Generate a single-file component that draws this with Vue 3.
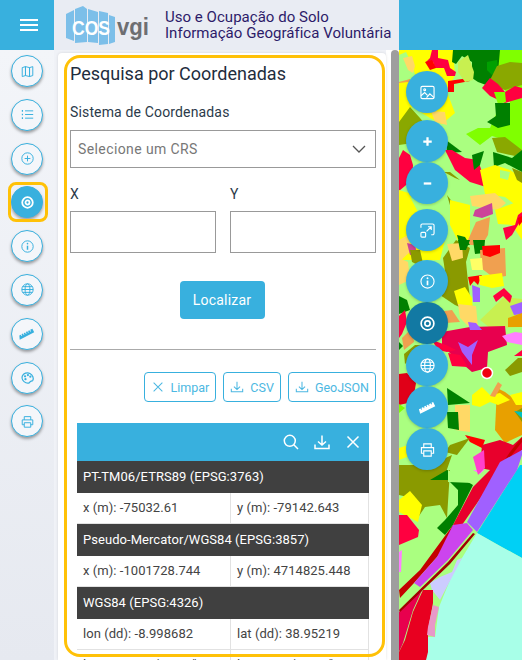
<script setup>
const sideButtons = ["map", "list", "plus", "target", "info", "globe", "ruler", "palette", "printer"];

const mapGroups = [
  ["image"],
  ["zoomin", "zoomout"],
  ["extent"],
  ["info", "target", "globe", "ruler", "printer"],
];

const results = [
  { crs: "PT-TM06/ETRS89 (EPSG:3763)", a: "x (m): -75032.61", b: "y (m): -79142.643" },
  { crs: "Pseudo-Mercator/WGS84 (EPSG:3857)", a: "x (m): -1001728.744", b: "y (m): 4714825.448" },
  { crs: "WGS84 (EPSG:4326)", a: "lon (dd): -8.998682", b: "lat (dd): 38.95219" },
];

// painted in order, page coordinates
const mapShapes = [
  // top
  ["#80ff00", "490,50 522,50 522,160 505,140 492,136 480,145 466,134 478,128 490,128 500,105 510,103"],
  ["#ffff00", "399,50 453,50 455,75 447,92 455,113 442,124 430,118 412,107 399,125"],
  ["#aaff80", "399,55 406,52 410,60 417,80 399,82"],
  ["#ffd966", "403,58 412,56 415,66 413,73 408,70"],
  ["#f0a050", "399,82 410,79 410,82 399,86"],
  ["#ffff00", "399,83 408,82 408,110 399,122"],
  ["#ff0040", "432,50 438,50 438,58 448,60 450,68 456,72 455,76 447,76 444,68 435,68 433,62 426,62 430,58"],
  ["#ff0000", "425,62 432,60 436,68 430,70"],
  ["#ff0000", "448,81 469,78 470,81 454,84 454,92 448,92"],
  ["#008000", "453,50 500,50 498,72 494,78 486,85 478,82 472,78 472,62 462,56 456,64 452,62"],
  ["#00a000", "487,62 497,60 498,70 492,75 487,70"],
  ["#c8f050", "458,62 468,55 474,72 473,80 465,82 458,72"],
  ["#8aa800", "490,80 497,66 510,62 522,63 522,85 505,90 496,88"],
  ["#ff0040", "482,88 490,78 498,84 505,92 515,86 522,88 522,98 505,103 490,96"],
  ["#80ff00", "494,92 505,92 506,102 498,104"],
  ["#008000", "495,103 510,103 510,125 498,128 487,122 496,116"],
  ["#8aa800", "399,122 410,107 420,118 428,128 445,135 420,142 399,145"],
  ["#ffd966", "431,111 445,112 447,125 435,122"],
  // middle band
  ["#008000", "446,140 462,152 447,153"],
  ["#ff0040", "403,150 410,155 413,165 412,180 399,191 399,158"],
  ["#ff0040", "445,150 452,150 465,158 478,160 483,175 494,182 486,187 470,182 455,170"],
  ["#8aa800", "492,138 505,137 522,150 515,156 497,152"],
  ["#008000", "493,152 512,158 522,150 522,172 505,163 494,167"],
  ["#008000", "472,155 484,151 480,165 474,170"],
  ["#ffff00", "480,170 495,165 510,170 522,178 522,210 505,197 485,194"],
  ["#aaff80", "500,170 510,172 508,180 500,178"],
  ["#8a9a00", "512,168 522,172 522,183 517,180"],
  ["#ffff00", "399,190 415,195 440,205 445,240 440,260 405,260 399,260"],
  ["#ffd966", "399,240 408,235 412,250 399,262"],
  ["#aaff80", "410,197 445,205 450,232 440,245 425,225"],
  ["#8a9a00", "444,172 450,172 460,180 455,178"],
  ["#8a9a00", "447,195 462,215 470,225 465,232 455,222"],
  ["#ffff00", "450,200 470,205 470,240 460,245 450,225"],
  ["#ffd966", "470,196 495,193 506,203 498,210 472,206"],
  ["#cc4499", "475,210 492,203 493,214 482,218 473,216"],
  ["#ffff00", "495,210 522,200 522,240 512,225 498,224"],
  ["#f0a050", "468,240 476,222 490,217 488,235 482,245 470,245"],
  ["#ff0040", "503,228 515,225 518,215 522,212 522,218 512,235 506,240"],
  ["#ff0000", "518,218 522,216 522,222 519,226"],
  ["#008000", "457,235 465,237 470,245 460,246"],
  // lower middle
  ["#ffd966", "399,258 408,262 410,280 399,285"],
  ["#cc4499", "407,243 415,245 417,254 410,255"],
  ["#8a9a00", "410,250 420,250 424,268 412,262"],
  ["#8a9a00", "443,258 456,240 470,248 466,262 468,282 470,298 473,313 455,305 440,295 446,278"],
  ["#ffd966", "447,244 462,243 463,258 452,261"],
  ["#008000", "458,240 470,240 466,250 460,250"],
  ["#008000", "473,240 485,240 484,253 475,254"],
  ["#f0a050", "480,250 505,248 506,276 494,278 481,268"],
  ["#ffff66", "470,259 482,258 483,270 472,270"],
  ["#ff0000", "482,246 500,245 500,253 490,257 483,255"],
  ["#ff0000", "468,277 482,275 478,285 474,281 470,286"],
  ["#ffff00", "479,276 502,273 504,286 492,288 480,285"],
  ["#a060ff", "472,285 480,288 480,302 473,302"],
  ["#ffff00", "454,291 465,287 472,298 473,312 458,305"],
  ["#c8f050", "480,320 504,297 522,299 522,327 490,328"],
  ["#ff0040", "493,296 504,288 512,296 510,303 503,296 496,302"],
  ["#a060ff", "510,306 522,302 522,314 514,315"],
  ["#e8a000", "508,318 522,313 522,327 508,327"],
  ["#ffd966", "458,304 476,306 478,327 468,326 460,318"],
  ["#f0a050", "437,312 452,310 460,322 445,323"],
  ["#008000", "399,296 407,300 410,310 399,314"],
  ["#ff0040", "399,316 405,310 407,322 402,334 399,338"],
  ["#f0a050", "402,338 412,328 414,342 404,350"],
  ["#008000", "399,342 403,346 399,350"],
  ["#8a9a00", "404,354 415,345 425,345 405,364"],
  // crimson centre
  ["#e8004e", "442,332 470,327 505,326 507,345 488,352 487,368 472,372 458,360 442,346"],
  ["#ff0040", "432,340 446,345 456,350 447,352 438,350"],
  ["#ff0040", "448,353 460,355 468,367 452,366"],
  ["#a060ff", "458,342 468,347 478,340 472,355 472,365 462,352"],
  ["#ff80ff", "502,336 515,332 522,333 522,345 507,342"],
  ["#a060ff", "468,322 476,323 482,330 470,330"],
  ["#8a9a00", "505,370 518,358 522,358 522,372 510,376"],
  ["#ff0040", "514,356 522,350 522,356"],
  // lower right
  ["#e8a000", "497,388 505,392 522,405 522,435 505,443 495,430"],
  ["#ffff00", "472,395 482,387 490,395 500,393 510,400 498,405 490,402 480,407 472,405"],
  ["#ffff00", "510,395 522,392 522,405 516,405"],
  ["#f0a050", "490,396 498,382 502,385 495,397"],
  ["#8a9a00", "515,412 522,408 522,422"],
  ["#00c0c0", "514,411 522,412 522,418"],
  ["#008000", "447,388 470,403 448,405"],
  ["#e00018", "399,374 407,373 416,383 414,395 408,403 399,405"],
  ["#80ff00", "399,404 405,408 399,413"],
  ["#ffd966", "455,405 470,405 470,432 455,430"],
  ["#008000", "447,412 458,412 459,430 448,428"],
  ["#ff0000", "465,435 485,440 482,448 470,442"],
  ["#8a9a00", "450,445 470,438 457,455 445,452"],
  ["#ffff00", "399,448 408,445 412,455 399,460"],
  // bottom
  ["#8a9a00", "399,470 450,470 447,518 440,505 425,507 417,519 412,498 399,495"],
  ["#8a9a00", "399,465 430,465 452,455 445,475 399,475"],
  ["#008000", "430,480 447,470 473,485 453,525 445,535 437,528 445,520 458,505 458,490 448,480"],
  ["#aaff80", "448,470 473,483 448,482"],
  ["#ffff00", "399,500 410,491 422,505 418,522 399,512"],
  ["#ff0040", "399,515 407,515 419,530 418,537 399,545"],
  ["#ff80ff", "399,552 402,550 401,572 399,572"],
  ["#ff80ff", "473,470 484,470 480,474"],
  // coast
  ["#00d0f5", "520,465 522,465 522,558 500,546 477,533"],
  ["#a8ffe8", "477,533 500,546 522,558 522,660 426,660 428,637 435,637 439,607 452,575 462,558"],
  ["#e8002c", "482,445 500,440 513,445 522,437 522,450 500,470 462,525 453,525 473,487 490,470 480,468"],
  ["#ff40cc", "473,457 484,450 485,468 478,475"],
  ["#c40000", "490,482 510,452 522,437 522,442 500,470"],
  ["#c40000", "453,525 462,525 437,557 414,583 400,598 399,590 420,570"],
  ["#a060ff", "500,462 522,450 522,455 517,470 477,532 467,522"],
  ["#cc44ee", "453,525 467,523 473,530 448,560 420,587 414,583 437,557"],
  ["#ccccff", "430,583 440,577 452,572 457,560 462,558 440,600 432,590"],
  ["#e8004e", "399,612 423,588 413,610 403,643 399,652"],
  ["#a00000", "473,533 475,534 450,564 400,612 399,610 448,562"],
  ["#e80020", "423,590 433,590 433,603 428,630 428,652 426,660 399,660 399,652 405,640 413,612"],
  ["#e898c8", "433,605 439,607 435,625 435,637 427,635 428,627"],
];
</script>

<template>
  <div class="app">
    <header class="topbar">
      <button class="menu"><span></span><span></span><span></span></button>
      <div class="brand">
        <svg class="logo" viewBox="0 0 86 40" width="86" height="40">
          <g fill="#7cbfe9">
            <path d="M0 8l8-4v31l-8-3z" />
            <path d="M9 3l8-3 4 3v33l-12 1z" />
            <path d="M22 3l10 3v31l-10-1z" />
            <path d="M33 5l9 2v31l-9 1z" />
            <path d="M43 9l6 2v25l-6 2z" />
          </g>
          <text x="6" y="29" class="logo-cos" textLength="38" lengthAdjust="spacingAndGlyphs">COS</text>
          <text x="51" y="29" class="logo-vgi" textLength="32" lengthAdjust="spacingAndGlyphs">vgi</text>
        </svg>
        <div class="brand-text">
          <div>Uso e Ocupação do Solo</div>
          <div>Informação Geográfica Voluntária</div>
        </div>
      </div>
      <div class="top-fill"></div>
    </header>

    <div class="main">
      <aside class="sidebar">
        <div v-for="b in sideButtons" :key="b" class="side-wrap" :class="{ current: b === 'target' }">
          <button class="side-btn" :class="{ active: b === 'target' }">
            <svg viewBox="0 0 16 16" class="ico">
              <template v-if="b === 'map'">
                <path d="M1.5 3.2 5.5 2v11l-4 1.2zM5.5 2l5 1.2v11l-5-1.2zM10.5 3.2l4-1.2v11l-4 1.200z" />
              </template>
              <template v-else-if="b === 'list'">
                <path d="M5 3.5h10M5 8h10M5 12.500h10" />
                <path d="M1 3.500h1.500M1 8h1.500M1 12.500h1.500" stroke-width="2" />
              </template>
              <template v-else-if="b === 'plus'">
                <circle cx="8" cy="8" r="7" />
                <path d="M8 4.500v7M4.500 8h7" />
              </template>
              <template v-else-if="b === 'target'">
                <circle cx="8" cy="8" r="6.500" stroke-width="2.200" />
                <circle cx="8" cy="8" r="2.500" stroke-width="2.200" />
              </template>
              <template v-else-if="b === 'info'">
                <circle cx="8" cy="8" r="7" />
                <path d="M8 7v5" stroke-width="1.800" />
                <circle cx="8" cy="4.500" r="1" fill="currentColor" stroke="none" />
              </template>
              <template v-else-if="b === 'globe'">
                <circle cx="8" cy="8" r="7" />
                <ellipse cx="8" cy="8" rx="3" ry="7" />
                <path d="M1 8h14M2 4.500h12M2 11.500h12" />
              </template>
              <template v-else-if="b === 'ruler'">
                <path transform="rotate(-27 8 8)" fill="currentColor" stroke="none"
                  d="M-2 5.500h2v2h1v-2h2v2h1v-2h2v2h1v-2h2v2h1v-2h2v2h1v-2h3v5h-20z" />
              </template>
              <template v-else-if="b === 'palette'">
                <path stroke-width="1.500" d="M1.500 6.500c1.500-3.500 6-5.500 9.500-3.500s5 6 3.500 8.500c-1 1.500-3 .5-3.500 2-.5 1.500-2.500 2-5 1C2.500 13.300.5 9.500 1.500 6.500z" />
                <circle cx="5" cy="6.500" r="1.400" fill="currentColor" stroke="none" />
                <circle cx="8.500" cy="5" r="1.400" fill="currentColor" stroke="none" />
                <circle cx="11.500" cy="7" r="1.400" fill="currentColor" stroke="none" />
                <circle cx="5.500" cy="10" r="1.400" fill="currentColor" stroke="none" />
              </template>
              <template v-else>
                <path d="M4 6V2h8v4M4 12H1.500V6h13v6H12" />
                <path d="M4 9.500h8V15H4z" />
              </template>
            </svg>
          </button>
        </div>
      </aside>

      <section class="panel">
        <div class="panel-body">
          <h2>Pesquisa por Coordenadas</h2>
          <label class="field-label">Sistema de Coordenadas</label>
          <div class="select">
            <span>Selecione um CRS</span>
            <svg viewBox="0 0 16 16" width="16" height="16" class="chev"><path d="M2 5l6 6 6-6" /></svg>
          </div>
          <div class="coords">
            <div>
              <label class="field-label">X</label>
              <div class="input"></div>
            </div>
            <div>
              <label class="field-label">Y</label>
              <div class="input"></div>
            </div>
          </div>
          <div class="locate-row"><button class="locate">Localizar</button></div>
          <hr />
          <div class="actions">
            <button class="ghost">
              <svg viewBox="0 0 16 16" width="14" height="14"><path d="M3 3l10 10M13 3 3 13" /></svg>
              <span>Limpar</span>
            </button>
            <button class="ghost">
              <svg viewBox="0 0 16 16" width="14" height="14"><path d="M1.500 10v3.500h13V10M8 2v8.500M4.500 7.500 8 11l3.500-3.500" /></svg>
              <span>CSV</span>
            </button>
            <button class="ghost">
              <svg viewBox="0 0 16 16" width="14" height="14"><path d="M1.500 10v3.500h13V10M8 2v8.500M4.500 7.500 8 11l3.500-3.500" /></svg>
              <span>GeoJSON</span>
            </button>
          </div>

          <div class="results">
            <div class="results-head">
              <svg viewBox="0 0 16 16" width="16" height="16"><circle cx="6.800" cy="6.800" r="5.500" /><path d="M10.800 10.800 15 15" /></svg>
              <svg viewBox="0 0 16 16" width="16" height="16"><path d="M1 10.500V14.500h14v-4M8 1.500v9.500M4 7.500 8 11l4-3.500" /></svg>
              <svg viewBox="0 0 16 16" width="16" height="16"><path d="M2.500 2.500l11 11M13.500 2.500l-11 11" /></svg>
            </div>
            <template v-for="r in results" :key="r.crs">
              <div class="crs">{{ r.crs }}</div>
              <div class="vals">
                <div>{{ r.a }}</div>
                <div>{{ r.b }}</div>
              </div>
            </template>
            <div class="vals">
              <div>lon: -008º 59'55.26"W</div>
              <div>lat: 38º57'07.88"N</div>
            </div>
          </div>
        </div>
        <div class="outline"></div>
      </section>

      <div class="scroll"><div class="thumb"></div></div>

      <div class="map">
        <svg class="map-svg" viewBox="399 50 123 610" width="123" height="610">
          <rect x="399" y="50" width="123" height="610" fill="#aaff80" />
          <polygon v-for="(s, i) in mapShapes" :key="i" :points="s[1]" :fill="s[0]" />
          <circle cx="487" cy="373" r="5.500" fill="#f00010" stroke="#fff" stroke-width="1.500" />
        </svg>
        <div class="map-tools">
          <div v-for="(g, gi) in mapGroups" :key="gi" class="tool-group">
            <button v-for="t in g" :key="t" class="map-btn" :class="{ active: t === 'target' }">
              <svg viewBox="0 0 16 16" width="15" height="15" class="ico">
                <template v-if="t === 'image'">
                  <rect x="1" y="1.500" width="14" height="13" rx="1.500" />
                  <path d="M1 11.500 5 8l3 3M7 13.500l3.500-4 4.500 4" />
                  <circle cx="5" cy="5" r="1" />
                </template>
                <template v-else-if="t === 'zoomin'">
                  <path d="M8 3.500v9M3.500 8h9" stroke-width="2.400" />
                </template>
                <template v-else-if="t === 'zoomout'">
                  <path d="M4 8h8" stroke-width="2.400" />
                </template>
                <template v-else-if="t === 'extent'">
                  <path d="M5 1h8.500A1.500 1.500 0 0 1 15 2.500V11a1.500 1.500 0 0 1-1.500 1.500H12M1 5V2.500A1.500 1.500 0 0 1 2.500 1H5" />
                  <rect x="1" y="10" width="5" height="5" rx="1" />
                  <path d="M7 9l5-5M8.500 4H12v3.500" />
                </template>
                <template v-else-if="t === 'info'">
                  <circle cx="8" cy="8" r="7" />
                  <path d="M8 7v5" stroke-width="1.800" />
                  <circle cx="8" cy="4.500" r="1" fill="currentColor" stroke="none" />
                </template>
                <template v-else-if="t === 'target'">
                  <circle cx="8" cy="8" r="6.800" stroke-width="1.800" />
                  <circle cx="8" cy="8" r="2.800" stroke-width="1.800" />
                </template>
                <template v-else-if="t === 'globe'">
                  <circle cx="8" cy="8" r="7" />
                  <ellipse cx="8" cy="8" rx="3" ry="7" />
                  <path d="M1 8h14M2 4.500h12M2 11.500h12" />
                </template>
                <template v-else-if="t === 'ruler'">
                  <path transform="rotate(-27 8 8)" fill="currentColor" stroke="none"
                    d="M-1 5.500h2v1.500h1v-1.500h2v1.500h1v-1.500h2v1.500h1v-1.500h2v1.500h1v-1.500h2v1.500h1v-1.500h2v5h-18z" />
                </template>
                <template v-else>
                  <path d="M4 6V2h8v4M4 12H1.500V6h13v6H12" />
                  <path d="M4 9.500h8V15H4z" />
                </template>
              </svg>
            </button>
          </div>
        </div>
      </div>
    </div>
  </div>
</template>

<style>
html, body { margin: 0; height: 100%; overflow: hidden; }
</style>

<style scoped>
.app {
  width: 522px;
  height: 660px;
  overflow: hidden;
  display: flex;
  flex-direction: column;
  font-family: Roboto, "Liberation Sans", sans-serif;
  background: #f0f2f7;
}
button { font-family: inherit; cursor: pointer; }

.topbar { height: 50px; display: flex; flex: none; background: #e9ecf3; }
.menu {
  width: 54px;
  background: #38b0de;
  border: 0;
  padding: 0;
  display: flex;
  flex-direction: column;
  gap: 3px;
  align-items: center;
  justify-content: center;
}
.menu span { display: block; width: 18px; height: 2px; background: #fff; margin-left: 4px; }
.brand { width: 345px; display: flex; align-items: center; padding-left: 12px; box-sizing: border-box; }
.logo { flex: none; margin-right: 13px; margin-top: 2px; }
.logo-cos { font: 700 21px "Liberation Sans", sans-serif; fill: #fff; }
.logo-vgi { font: 700 24px "Liberation Sans", sans-serif; fill: #6d6e71; }
.brand-text { font-size: 15px; line-height: 16px; color: #2d1b69; letter-spacing: .03px; white-space: nowrap; }
.top-fill { flex: 1; background: #38b0de; }

.main { flex: 1; display: flex; min-height: 0; position: relative; }
.sidebar {
  width: 54px;
  flex: none;
  display: flex;
  flex-direction: column;
  align-items: center;
  gap: 11.8px;
  padding-top: 5px;
  box-sizing: border-box;
  background: linear-gradient(#f3f5f9, #e6e9f0);
}
.side-wrap { width: 32px; height: 32px; position: relative; }
.side-wrap.current::after {
  content: "";
  position: absolute;
  left: -3px;
  top: -4px;
  width: 34px;
  height: 34px;
  border: 3px solid #ffc107;
  border-radius: 8px;
}
.side-btn {
  width: 32px;
  height: 32px;
  border-radius: 50%;
  border: 1px solid #38b0de;
  background: #f4f6fa;
  color: #38b0de;
  padding: 0;
  display: flex;
  align-items: center;
  justify-content: center;
  box-shadow: 0 2px 3px rgba(0, 0, 0, .35);
}
.side-btn .ico { width: 13px; height: 13px; overflow: visible; }
.side-btn.active { background: #38b0de; color: #fff; }
.ico { fill: none; stroke: currentColor; stroke-width: 1.2; overflow: visible; }

.panel {
  width: 328px;
  margin: 3px 0 0 4px;
  background: #fff;
  position: relative;
  overflow: hidden;
  flex: none;
  border-radius: 4px 4px 0 0;
  box-shadow: 0 0 3px rgba(0, 0, 0, .12);
}
.panel-body { padding: 9px 10px 0 12px; color: #2b3a4a; }
.outline {
  position: absolute;
  left: 6px;
  top: 2px;
  width: 315px;
  height: 596px;
  border: 3px solid #ffc107;
  border-radius: 16px;
  pointer-events: none;
}
h2 { font-size: 18px; line-height: 24px; font-weight: 400; margin: 0 0 16px; color: #1f2d3d; }
.field-label { display: block; font-size: 14px; line-height: 20px; letter-spacing: .15px; }
.select {
  margin-top: 8px;
  height: 38px;
  border: 1px solid #999;
  box-sizing: border-box;
  display: flex;
  align-items: center;
  justify-content: space-between;
  padding: 0 8px 0 7px;
  font-size: 14px;
  letter-spacing: .4px;
  color: #777;
}
.chev { fill: none; stroke: #555; stroke-width: 1.3; }
.coords { display: grid; grid-template-columns: 146px 146px; gap: 14px; margin-top: 16px; }
.coords .input { height: 42px; margin-top: 7px; border: 1px solid #999; box-sizing: border-box; }
.locate-row { display: flex; justify-content: center; margin-top: 28px; padding-right: 2px; }
.locate {
  width: 85px;
  height: 38px;
  border: 0;
  border-radius: 4px;
  background: #38b0de;
  color: #fff;
  font-size: 14px;
  letter-spacing: .2px;
}
hr { margin: 30px 0 0; border: 0; border-top: 1px solid #aaa; }
.actions { display: flex; justify-content: flex-end; gap: 7px; margin-top: 22px; }
.ghost {
  height: 30px;
  display: flex;
  align-items: center;
  gap: 6px;
  padding: 0 6px;
  background: #fff;
  border: 1px solid #38b0de;
  border-radius: 4px;
  color: #4cb8e2;
  font-size: 12.5px;
}
.ghost svg { fill: none; stroke: currentColor; stroke-width: 1.2; }
.results { margin: 21px 7px 0 7px; font-size: 13px; letter-spacing: .05px; }
.results-head {
  height: 38px;
  background: #38b0de;
  display: flex;
  justify-content: flex-end;
  align-items: center;
  gap: 15px;
  padding-right: 8px;
}
.results-head svg { fill: none; stroke: #fff; stroke-width: 1.5; }
.crs { height: 32px; line-height: 32px; background: #404040; color: #fff; padding-left: 6px; }
.vals { display: grid; grid-template-columns: 154px 1fr; height: 31px; line-height: 30px; color: #444; }
.vals div { padding-left: 6px; border-bottom: 1px solid #e2e2e2; border-right: 1px solid #e2e2e2; white-space: nowrap; }

.scroll { width: 13px; flex: none; background: #fff; padding-left: 5px; box-sizing: border-box; }
.thumb { width: 8px; height: 100%; background: #9e9e9e; border-radius: 4px 4px 0 0; }
.map { flex: 1; position: relative; overflow: hidden; }
.map-svg { display: block; }
.map-tools {
  position: absolute;
  left: 7px;
  top: 21px;
  display: flex;
  flex-direction: column;
}
.tool-group { display: flex; flex-direction: column; }
.tool-group:nth-child(1) { margin-bottom: 7px; }
.tool-group:nth-child(2) { margin-bottom: 5px; }
.tool-group:nth-child(3) { margin-bottom: 9px; }
.map-btn {
  width: 42px;
  height: 42px;
  border: 0;
  padding: 0;
  border-radius: 50%;
  background: #38b0de;
  color: #fff;
  display: flex;
  align-items: center;
  justify-content: center;
  box-shadow: 0 1px 3px rgba(0, 0, 0, .2);
}
.map-btn.active { background: #1279a3; }
</style>
